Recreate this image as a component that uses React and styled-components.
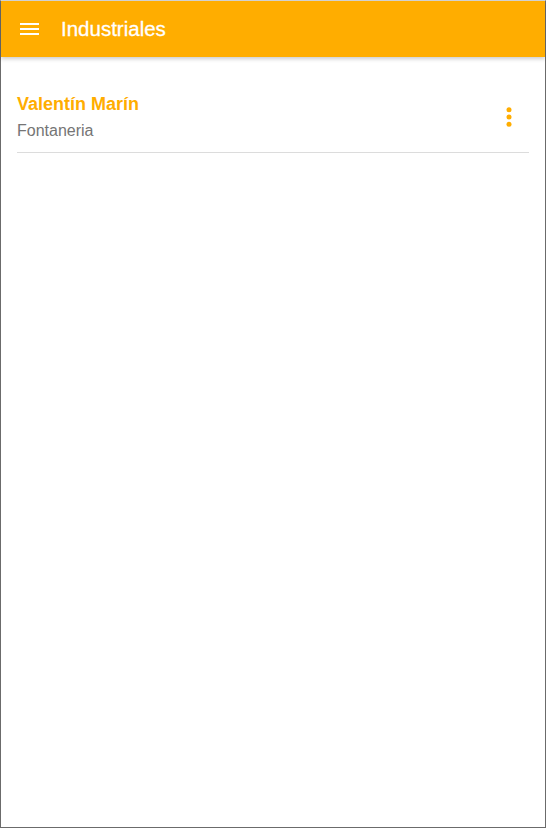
import React from "react";
import styled, { createGlobalStyle } from "styled-components";

const GlobalStyle = createGlobalStyle`
  html, body {
    margin: 0;
    padding: 0;
    background: #ffffff;
    font-family: "Liberation Sans", Arial, sans-serif;
  }
  * { box-sizing: border-box; }
`;

const Frame = styled.div`
  height: 100vh;
  border: 1px solid #6b6b6b;
  border-top-color: #d6d6d6;
  background: #ffffff;
  display: flex;
  flex-direction: column;
`;

const Toolbar = styled.header`
  height: 56px;
  background: #ffad00;
  display: flex;
  align-items: center;
  padding: 0 16px 0 19px;
  gap: 22px;
  box-shadow: 0 2px 4px rgba(0, 0, 0, 0.2);
  position: relative;
  z-index: 1;
`;

const MenuButton = styled.button`
  border: 0;
  background: none;
  padding: 0;
  width: 19px;
  height: 24px;
  display: flex;
  align-items: center;
  justify-content: center;
  cursor: pointer;
`;

const Title = styled.h1`
  margin: 0;
  font-size: 20.5px;
  font-weight: 400;
  color: #ffffff;
  -webkit-text-stroke: 0.3px #ffffff;
`;

const List = styled.ul`
  list-style: none;
  margin: 0;
  padding: 24px 16px 0 16px;
`;

const Item = styled.li`
  display: flex;
  align-items: center;
  justify-content: space-between;
  padding: 12px 0 11px 0;
  border-bottom: 1px solid #dcdcdc;
`;

const ItemText = styled.div`
  display: flex;
  flex-direction: column;
  gap: 6px;
`;

const Name = styled.span`
  font-size: 18px;
  font-weight: 700;
  color: #ffad00;
  line-height: 22px;
`;

const Trade = styled.span`
  font-size: 16px;
  color: #757575;
  line-height: 20px;
`;

const MoreButton = styled.button`
  border: 0;
  background: none;
  padding: 0;
  width: 28px;
  height: 28px;
  margin-right: 6px;
  display: flex;
  align-items: center;
  justify-content: center;
  cursor: pointer;
`;

const workers = [{ name: "Valentín Marín", trade: "Fontaneria" }];

export default function App() {
  return (
    <>
      <GlobalStyle />
      <Frame>
        <Toolbar>
          <MenuButton aria-label="Menú">
            <svg width="19" height="14" viewBox="0 0 19 14">
              <rect x="0" y="1" width="19" height="2" fill="#fff" />
              <rect x="0" y="6" width="19" height="2" fill="#fff" />
              <rect x="0" y="11" width="19" height="2" fill="#fff" />
            </svg>
          </MenuButton>
          <Title>Industriales</Title>
        </Toolbar>
        <List>
          {workers.map((w) => (
            <Item key={w.name}>
              <ItemText>
                <Name>{w.name}</Name>
                <Trade>{w.trade}</Trade>
              </ItemText>
              <MoreButton aria-label="Más opciones">
                <svg width="28" height="28" viewBox="0 0 28 28">
                  <circle cx="14" cy="6.7" r="2.5" fill="#ffad00" />
                  <circle cx="14" cy="14" r="2.5" fill="#ffad00" />
                  <circle cx="14" cy="21.3" r="2.5" fill="#ffad00" />
                </svg>
              </MoreButton>
            </Item>
          ))}
        </List>
      </Frame>
    </>
  );
}
